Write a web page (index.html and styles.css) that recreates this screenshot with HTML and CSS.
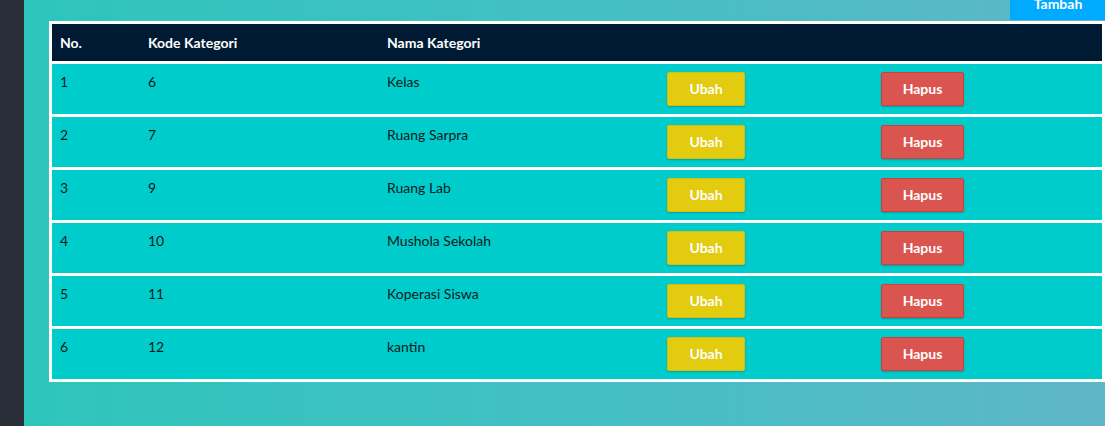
FILE: index.html
```html
<!DOCTYPE html>
<html>
<head>
<meta charset="utf-8">
<link rel="stylesheet" href="styles.css">
</head>
<body>
<div class="layout">
  <aside class="sidebar"></aside>
  <main class="main">
    <div class="toolbar">
      <button class="btn btn-add">Tambah</button>
    </div>
    <table class="data">
      <thead>
        <tr>
          <th class="c-no">No.</th>
          <th class="c-kode">Kode Kategori</th>
          <th class="c-nama">Nama Kategori</th>
          <th class="c-ubah"></th>
          <th class="c-hapus"></th>
        </tr>
      </thead>
      <tbody>
        <tr><td>1</td><td>6</td><td>Kelas</td><td><button class="btn btn-ubah">Ubah</button></td><td><button class="btn btn-hapus">Hapus</button></td></tr>
        <tr><td>2</td><td>7</td><td>Ruang Sarpra</td><td><button class="btn btn-ubah">Ubah</button></td><td><button class="btn btn-hapus">Hapus</button></td></tr>
        <tr><td>3</td><td>9</td><td>Ruang Lab</td><td><button class="btn btn-ubah">Ubah</button></td><td><button class="btn btn-hapus">Hapus</button></td></tr>
        <tr><td>4</td><td>10</td><td>Mushola Sekolah</td><td><button class="btn btn-ubah">Ubah</button></td><td><button class="btn btn-hapus">Hapus</button></td></tr>
        <tr><td>5</td><td>11</td><td>Koperasi Siswa</td><td><button class="btn btn-ubah">Ubah</button></td><td><button class="btn btn-hapus">Hapus</button></td></tr>
        <tr><td>6</td><td>12</td><td>kantin</td><td><button class="btn btn-ubah">Ubah</button></td><td><button class="btn btn-hapus">Hapus</button></td></tr>
      </tbody>
    </table>
  </main>
</div>
</body>
</html>
```

FILE: styles.css
```css
html, body {
  margin: 0;
  padding: 0;
  height: 100%;
  overflow: hidden;
}
body {
  font-family: Lato, "Open Sans", sans-serif;
  font-size: 14px;
  color: #0a1a1a;
}
.layout {
  display: flex;
  height: 426px;
}
.sidebar {
  width: 24px;
  flex: none;
  background: #2a2e39;
}
.main {
  flex: 1;
  min-width: 0;
  overflow: hidden;
  background: linear-gradient(to right, #2ec5bc 0%, #45bfc4 55%, #5fb6c7 100%);
}
.toolbar {
  height: 21px;
  display: flex;
  justify-content: flex-end;
  align-items: flex-end;
}
.btn {
  font-family: Lato, "Open Sans", sans-serif;
  font-size: 14px;
  font-weight: 700;
  color: #fff;
  border: 1px solid transparent;
  border-radius: 2px;
  height: 34px;
  padding: 0 22px;
  line-height: 32px;
  cursor: pointer;
}
.btn-add {
  background: #00aaff;
  border-color: #00aaff;
  border-radius: 0;
  height: 33px;
  margin-bottom: 1px;
  width: 96px;
  margin-right: -1px;
}
.data {
  width: 1056px;
  margin-left: 25px;
  border-collapse: separate;
  border-spacing: 0 3px;
  padding: 0 3px;
  background: #fff;
  table-layout: fixed;
}
.data th {
  background: #001a33;
  color: #fff;
  font-weight: 700;
  text-align: left;
  height: 37px;
  padding: 0 8px;
  box-sizing: border-box;
  vertical-align: middle;
}
.data td {
  background: #00cccc;
  padding: 8px;
  height: 50px;
  box-sizing: border-box;
  line-height: 20px;
  vertical-align: top;
}
.c-no { width: 88px; }
.c-kode { width: 239px; }
.c-nama { width: 280px; }
.c-ubah { width: 214px; }
.btn-ubah {
  background: #e3cc10;
  border-color: #d6bf0a;
  box-shadow: 0 1px 2px rgba(0, 0, 0, 0.2);
  width: 78px;
  padding: 0;
  display: block;
}
.btn-hapus {
  background: #db5550;
  border-color: #cf3f3a;
  box-shadow: 0 1px 2px rgba(0, 0, 0, 0.2);
  width: 83px;
  padding: 0;
  display: block;
}
```
